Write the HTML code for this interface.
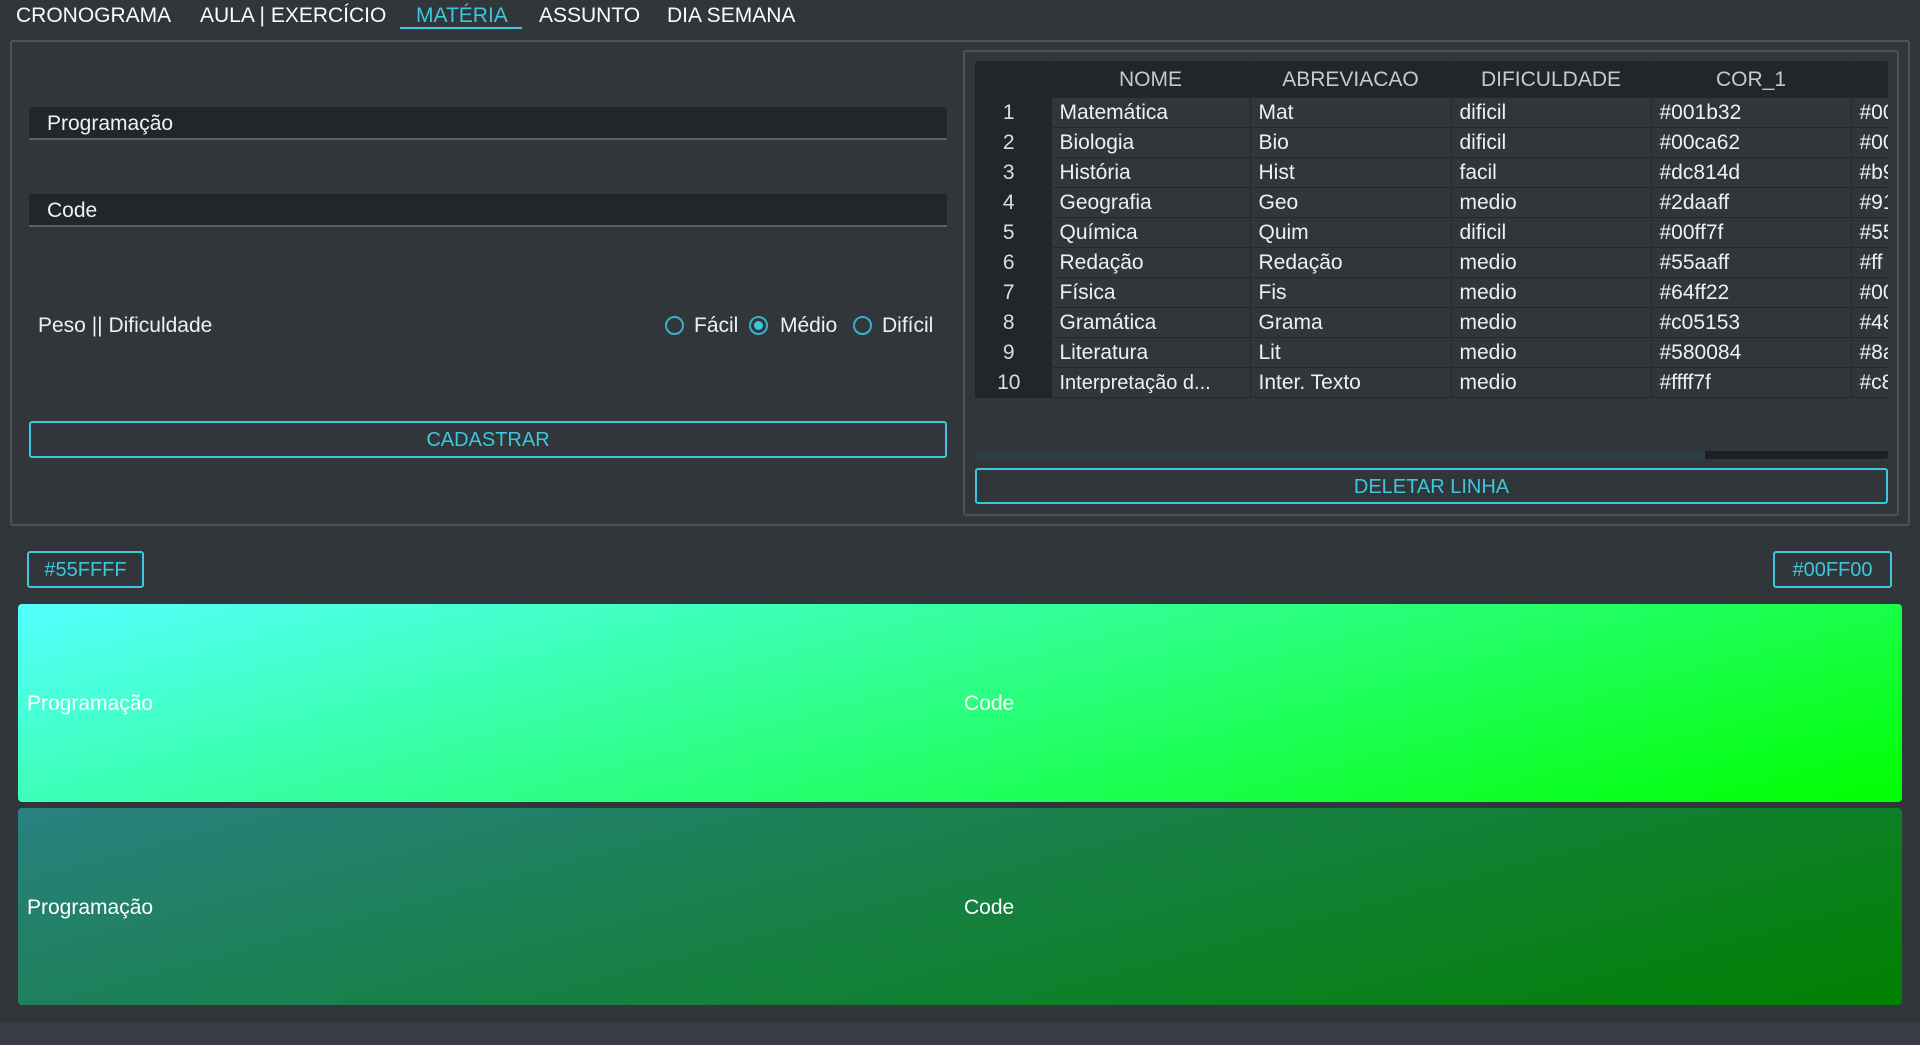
<!DOCTYPE html>
<html><head><meta charset="utf-8"><style>
*{box-sizing:border-box;margin:0;padding:0}
body{width:1920px;height:1045px;background:#31363b;font-family:"Liberation Sans","DejaVu Sans",sans-serif;color:#eff0f1;position:relative;overflow:hidden;font-size:21px}
.a{position:absolute}
.tab{position:absolute;top:4px;font-size:21px;color:#fcfcfc;white-space:nowrap}
.field{position:absolute;left:29px;width:918px;height:33px;background:#232629;border-bottom:2px solid #5b6066;border-radius:3px 3px 0 0;padding-left:18px;line-height:34px;font-size:21px}
.btn{position:absolute;border:2px solid #3dc6dc;border-radius:3px;color:#3dc6dc;text-align:center;font-size:20px}
.radio{position:absolute;top:316px;width:19px;height:19px;border:2px solid #3dafc9;border-radius:50%}
table{border-collapse:collapse;font-size:21px}
td,th{height:30px;border-right:1px solid #25292c;border-bottom:1px solid #25292c;white-space:nowrap;overflow:hidden;padding-left:8px;text-align:left;font-weight:normal;padding-top:2px}
th{height:36px;background:#232629;color:#c8c9ca;text-align:center;padding:2px 0 0 0}
td.n{background:#232629;text-align:center;padding:2px 8px 0 0;color:#dcdcdc}
.g{position:absolute;left:18px;width:1884px;border-radius:4px}
.g span{position:absolute;font-size:21px;color:#fff;top:50%;transform:translateY(-45%)}
</style></head><body>
<div class="tab" style="left:16px">CRONOGRAMA</div>
<div class="tab" style="left:200px">AULA | EXERCÍCIO</div>
<div class="tab" style="left:416px;color:#3dc6dc">MATÉRIA</div>
<div class="a" style="left:400px;top:27px;width:122px;height:2px;background:#3dc6dc"></div>
<div class="tab" style="left:539px">ASSUNTO</div>
<div class="tab" style="left:667px">DIA SEMANA</div>

<div class="a" style="left:10px;top:40px;width:1900px;height:486px;border:2px solid #4b5258;border-radius:3px"></div>
<div class="field" style="top:107px">Programação</div>
<div class="field" style="top:194px">Code</div>
<div class="a" style="left:38px;top:314px">Peso || Dificuldade</div>
<div class="radio" style="left:665px"></div><div class="a" style="left:694px;top:314px">Fácil</div>
<div class="radio" style="left:749px"><div style="position:absolute;left:3px;top:3px;width:9px;height:9px;border-radius:50%;background:#3dc6dc"></div></div><div class="a" style="left:780px;top:314px">Médio</div>
<div class="radio" style="left:853px"></div><div class="a" style="left:882px;top:314px">Difícil</div>
<div class="btn" style="left:29px;top:421px;width:918px;height:37px;line-height:35px">CADASTRAR</div>

<div class="a" style="left:963px;top:50px;width:936px;height:466px;border:2px solid #4b5258;border-radius:3px"></div>
<div class="a" style="left:975px;top:61px;width:913px;height:398px;background:#31363b;overflow:hidden;border-radius:3px">
<table style="width:1000px;table-layout:fixed">
<colgroup><col style="width:76px"><col style="width:199px"><col style="width:201px"><col style="width:200px"><col style="width:200px"><col style="width:124px"></colgroup>
<tr><th></th><th>NOME</th><th>ABREVIACAO</th><th>DIFICULDADE</th><th>COR_1</th><th></th></tr>
<tr><td class="n">1</td><td>Matemática</td><td>Mat</td><td>dificil</td><td>#001b32</td><td>#00</td></tr>
<tr><td class="n">2</td><td>Biologia</td><td>Bio</td><td>dificil</td><td>#00ca62</td><td>#00</td></tr>
<tr><td class="n">3</td><td>História</td><td>Hist</td><td>facil</td><td>#dc814d</td><td>#b9</td></tr>
<tr><td class="n">4</td><td>Geografia</td><td>Geo</td><td>medio</td><td>#2daaff</td><td>#91</td></tr>
<tr><td class="n">5</td><td>Química</td><td>Quim</td><td>dificil</td><td>#00ff7f</td><td>#55</td></tr>
<tr><td class="n">6</td><td>Redação</td><td>Redação</td><td>medio</td><td>#55aaff</td><td>#ff</td></tr>
<tr><td class="n">7</td><td>Física</td><td>Fis</td><td>medio</td><td>#64ff22</td><td>#00</td></tr>
<tr><td class="n">8</td><td>Gramática</td><td>Grama</td><td>medio</td><td>#c05153</td><td>#48</td></tr>
<tr><td class="n">9</td><td>Literatura</td><td>Lit</td><td>medio</td><td>#580084</td><td>#8a</td></tr>
<tr><td class="n">10</td><td style="font-size:20px">Interpretação d...</td><td>Inter. Texto</td><td>medio</td><td>#ffff7f</td><td>#c8</td></tr>
</table>
<div class="a" style="left:0;top:390px;width:913px;height:8px;background:#1e2124"></div>
<div class="a" style="left:0;top:390px;width:730px;height:8px;background:#2c3e45"></div>
</div>
<div class="btn" style="left:975px;top:468px;width:913px;height:36px;line-height:34px">DELETAR LINHA</div>

<div class="btn" style="left:27px;top:551px;width:117px;height:37px;line-height:35px">#55FFFF</div>
<div class="btn" style="left:1773px;top:551px;width:119px;height:37px;line-height:35px">#00FF00</div>

<div class="g" style="top:604px;height:198px;background:linear-gradient(165deg,#55ffff 0%,#2bff80 50%,#00ff00 100%)"><span style="left:9px">Programação</span><span style="left:946px">Code</span></div>
<div class="g" style="top:808px;height:197px;background:linear-gradient(165deg,#2a8080 0%,#158040 50%,#008000 100%)"><span style="left:9px">Programação</span><span style="left:946px">Code</span></div>
<div class="a" style="left:0;top:1023px;width:1920px;height:22px;background:#393c44"></div>
</body></html>
